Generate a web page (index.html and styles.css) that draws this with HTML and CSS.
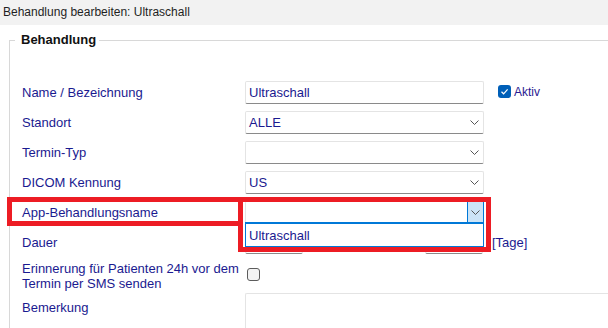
FILE: index.html
```html
<!DOCTYPE html>
<html lang="de">
<head>
<meta charset="utf-8">
<title>Behandlung bearbeiten</title>
<link rel="stylesheet" href="styles.css">
</head>
<body>
<div class="titlebar">Behandlung bearbeiten: Ultraschall</div>
<fieldset class="group">
  <legend class="group-title">Behandlung</legend>
  <div class="form">
    <div class="row">
      <div class="label">Name / Bezeichnung</div>
      <div class="ctl">
        <div class="field">Ultraschall</div>
        <span class="check check-on"><svg width="13" height="13" viewBox="0 0 13 13"><polyline points="3.5,6.8 5.6,8.8 9.6,4.4" fill="none" stroke="#fff" stroke-width="1.2"/></svg></span>
        <span class="check-label">Aktiv</span>
      </div>
    </div>
    <div class="row">
      <div class="label">Standort</div>
      <div class="ctl">
        <div class="field select"><span>ALLE</span><svg class="chev" width="9" height="5" viewBox="0 0 9 5"><polyline points="0.5,0.5 4.5,4.5 8.5,0.5" fill="none" stroke="#555" stroke-width="1"/></svg></div>
      </div>
    </div>
    <div class="row">
      <div class="label">Termin-Typ</div>
      <div class="ctl">
        <div class="field select"><span></span><svg class="chev" width="9" height="5" viewBox="0 0 9 5"><polyline points="0.5,0.5 4.5,4.5 8.5,0.5" fill="none" stroke="#555" stroke-width="1"/></svg></div>
      </div>
    </div>
    <div class="row">
      <div class="label">DICOM Kennung</div>
      <div class="ctl">
        <div class="field select"><span>US</span><svg class="chev" width="9" height="5" viewBox="0 0 9 5"><polyline points="0.5,0.5 4.5,4.5 8.5,0.5" fill="none" stroke="#555" stroke-width="1"/></svg></div>
      </div>
    </div>
    <div class="row">
      <div class="label">App-Behandlungsname</div>
      <div class="ctl">
        <div class="field select open"><span></span>
          <span class="drop-btn"><svg class="chev" width="9" height="5" viewBox="0 0 9 5"><polyline points="0.5,0.5 4.5,4.5 8.5,0.5" fill="none" stroke="#555" stroke-width="1"/></svg></span>
          <div class="droplist"><div class="option">Ultraschall</div></div>
        </div>
      </div>
    </div>
    <div class="row">
      <div class="label">Dauer</div>
      <div class="ctl">
        <div class="field small"></div>
        <div class="field small second"></div>
        <span class="unit">[Tage]</span>
      </div>
    </div>
    <div class="row row-tall">
      <div class="label label-multi">Erinnerung für Patienten 24h vor dem<br>Termin per SMS senden</div>
      <div class="ctl ctl-top">
        <span class="check check-off"></span>
      </div>
    </div>
    <div class="row row-last">
      <div class="label label-multi label-pad">Bemerkung</div>
      <div class="ctl ctl-top">
        <div class="textarea"></div>
      </div>
    </div>
  </div>
</fieldset>
<div class="mark mark-label"></div>
<div class="mark mark-select"></div>
</body>
</html>
```
FILE: styles.css
```css
html, body {
  margin: 0;
  padding: 0;
  background: #fff;
}
body {
  position: relative;
  width: 608px;
  height: 328px;
  overflow: hidden;
  font-family: "Liberation Sans", Arial, sans-serif;
  font-size: 13px;
  color: #1a1a90;
}
.titlebar {
  height: 25px;
  line-height: 25px;
  padding-left: 3px;
  background: #f2f2f2;
  color: #1f1f1f;
  font-size: 12px;
}
.group {
  margin: 7px 0 0 9px;
  padding: 0 0 0 12px;
  border: 1px solid #d8d8d8;
  border-right: none;
  border-bottom: none;
  min-width: 0;
}
.group-title {
  font-weight: bold;
  font-size: 13px;
  line-height: 16px;
  color: #111;
  padding: 0 3px 0 6px;
  margin-left: -7px;
}
.form {
  padding-top: 33px;
}
.row {
  display: grid;
  grid-template-columns: 223px 1fr;
  height: 30px;
}
.row-tall {
  height: 32px;
}
.row-last {
  height: 35px;
}
.label {
  line-height: 23px;
  white-space: nowrap;
}
.label-multi {
  line-height: 15px;
}
.label-pad {
  padding-top: 7px;
}
.ctl {
  display: flex;
  align-items: center;
  height: 23px;
}
.ctl-top {
  align-items: flex-start;
  height: auto;
}
.field {
  position: relative;
  box-sizing: border-box;
  width: 239px;
  height: 23px;
  padding: 0 4px 0 3px;
  line-height: 21px;
  background: #fff;
  border: 1px solid #e4e4e4;
  border-bottom: 1px solid #8a8a8a;
  border-radius: 2px;
  color: #1a1a90;
}
.select {
  display: flex;
  justify-content: space-between;
  align-items: center;
}
.chev {
  display: block;
}
.open {
  padding-right: 0;
}
.drop-btn {
  box-sizing: border-box;
  width: 17px;
  height: 22px;
  margin-top: -1px;
  margin-right: -1px;
  background: #cce4f7;
  border: 1px solid #0078d7;
  display: flex;
  align-items: center;
  justify-content: center;
}
.droplist {
  position: absolute;
  left: -1px;
  top: 20px;
  width: 239px;
  height: 25px;
  box-sizing: border-box;
  background: #fff;
  border: 1px solid #0078d7;
  border-top: 2px solid #0078d7;
  z-index: 2;
}
.option {
  padding: 1px 0 0 3px;
  line-height: 22px;
  color: #1a1a90;
}
.small {
  width: 58px;
}
.second {
  margin-left: 122px;
}
.unit {
  margin-left: 9px;
}
.check {
  box-sizing: border-box;
  display: inline-block;
  width: 13px;
  height: 13px;
  border-radius: 3px;
}
.check svg {
  display: block;
}
.check-on {
  background: #005fb8;
  margin-left: 14px;
  margin-top: -2px;
}
.check-off {
  background: #f3f3f3;
  border: 1px solid #5c5c5c;
  margin-left: 2px;
  margin-top: 7px;
}
.check-label {
  margin-left: 3px;
  font-size: 12px;
  color: #2a1a90;
  margin-top: -2px;
}
.textarea {
  box-sizing: border-box;
  width: 363px;
  height: 35px;
  border: 1px solid #e4e4e4;
  border-right: none;
  border-bottom: none;
  border-radius: 2px 0 0 0;
  background: #fff;
}
.mark {
  position: absolute;
  box-sizing: border-box;
  border: 5px solid #ed1c24;
  z-index: 5;
}
.mark-label {
  left: 7px;
  top: 197px;
  width: 236px;
  height: 29px;
}
.mark-select {
  left: 238px;
  top: 197px;
  width: 253px;
  height: 55px;
}
```
